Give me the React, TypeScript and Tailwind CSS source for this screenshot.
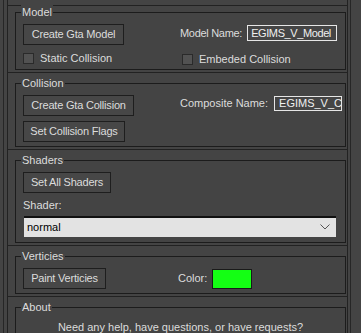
import React from "react";

const font = { fontFamily: '"Liberation Sans", Arial, sans-serif' };

function Group({
  label,
  h,
  children,
}: {
  label: string;
  h: string;
  children?: React.ReactNode;
}) {
  return (
    <div className={`relative border border-[#1c1c1c] ${h}`}>
      <span className="absolute -top-[8px] left-[5px] bg-[#444444] px-[1px] text-[11px] leading-[14px] text-[#dcdcdc]">
        {label}
      </span>
      {children}
    </div>
  );
}

function Btn({ children, w }: { children: React.ReactNode; w: string }) {
  return (
    <div
      className={`flex h-[21px] ${w} items-center justify-center border border-[#1e1e1e] bg-[#474747] text-[11px] tracking-[-0.2px] text-[#dcdcdc]`}
    >
      {children}
    </div>
  );
}

function Check({ label }: { label: string }) {
  return (
    <div className="flex h-[12px] items-center gap-[6px]">
      <div className="h-[11px] w-[11px] border border-[#2a2a2a] bg-[#525252]" />
      <span className="text-[11px] text-[#dcdcdc]">{label}</span>
    </div>
  );
}

function Rollout({
  first,
  children,
}: {
  first?: boolean;
  children: React.ReactNode;
}) {
  return (
    <div
      className={`border-t border-[#222222] pb-[2px] pl-[7px] pr-[1px] ${
        first ? "pt-[6px]" : "pt-[10px]"
      }`}
    >
      {children}
    </div>
  );
}

export default function App() {
  return (
    <div
      className="flex h-[333px] w-[361px] overflow-hidden bg-[#444444]"
      style={font}
    >
      <div className="w-[3px]" />
      <div className="w-[4px] border-l border-[#262626]" />
      <div className="flex w-[341px] flex-col border-x border-[#222222] pt-[5px]">
        <Rollout first>
          <Group label="Model" h="h-[58px]">
            <div className="grid grid-cols-[157px_1fr] pl-[7px] pt-[11px]">
              <div className="flex flex-col gap-[7px]">
                <Btn w="w-[101px]">Create Gta Model</Btn>
                <Check label="Static Collision" />
              </div>
              <div className="flex flex-col gap-[12px]">
                <div className="flex h-[17px] items-center gap-[5px] pt-[1px]">
                  <span className="text-[11px] tracking-[-0.3px] text-[#dcdcdc]">Model Name:</span>
                  <div className="flex h-[16px] w-[90px] items-center overflow-hidden border border-[#e6e6e6] bg-[#454545] pl-[3px] text-[11px] tracking-[-0.4px] text-[#f0f0f0] whitespace-nowrap">
                    EGIMS_V_Model
                  </div>
                </div>
                <div className="pl-[2px]">
                  <Check label="Embeded Collision" />
                </div>
              </div>
            </div>
          </Group>
        </Rollout>
        <Rollout>
          <Group label="Collision" h="h-[64px]">
            <div className="grid grid-cols-[157px_1fr] pl-[7px] pt-[11px]">
              <div className="flex flex-col gap-[5px]">
                <Btn w="w-[111px]">Create Gta Collision</Btn>
                <Btn w="w-[102px]">Set Collision Flags</Btn>
              </div>
              <div className="flex h-[15px] items-center gap-[6px] pt-[2px]">
                <span className="text-[11px] text-[#dcdcdc]">Composite Name:</span>
                <div className="flex h-[15px] w-[68px] items-center overflow-hidden border border-[#e6e6e6] bg-[#454545] pl-[4px] text-[11px] text-[#f0f0f0] whitespace-nowrap">
                  EGIMS_V_Col
                </div>
              </div>
            </div>
          </Group>
        </Rollout>
        <Rollout>
          <Group label="Shaders" h="h-[83px]">
            <div className="flex flex-col pl-[7px] pr-[9px] pt-[11px]">
              <Btn w="w-[88px]">Set All Shaders</Btn>
              <span className="mt-[5px] text-[11px] leading-[14px] text-[#dcdcdc]">
                Shader:
              </span>
              <div className="relative mt-[4px] ml-[1px] flex h-[21px] items-center border-t-2 border-[#111111] bg-[#e3e3e3] pl-[3px] text-[11px] text-black">
                normal
                <svg
                  className="absolute right-[6px] top-[6px]"
                  width="10"
                  height="6"
                  viewBox="0 0 10 6"
                >
                  <polyline
                    points="0.5,0.5 5,5 9.5,0.5"
                    fill="none"
                    stroke="#555"
                    strokeWidth="1"
                  />
                </svg>
              </div>
            </div>
          </Group>
        </Rollout>
        <Rollout>
          <Group label="Verticies" h="h-[38px]">
            <div className="grid grid-cols-[157px_1fr] pl-[7px] pt-[11px]">
              <Btn w="w-[83px]">Paint Verticies</Btn>
              <div className="flex h-[21px] items-center gap-[5px]">
                <span className="-ml-[2px] text-[11px] text-[#dcdcdc]">Color:</span>
                <div className="h-[20px] w-[40px] border border-[#1a1a1a] bg-[#14ff14]" />
              </div>
            </div>
          </Group>
        </Rollout>
        <Rollout>
          <Group label="About" h="h-[60px]">
            <div className="pt-[11px] text-center text-[11px] text-[#dcdcdc]">
              Need any help, have questions, or have requests?
            </div>
          </Group>
        </Rollout>
      </div>
      <div className="w-[2px]" />
      <div className="flex-1 border-l border-[#262626]" />
    </div>
  );
}
